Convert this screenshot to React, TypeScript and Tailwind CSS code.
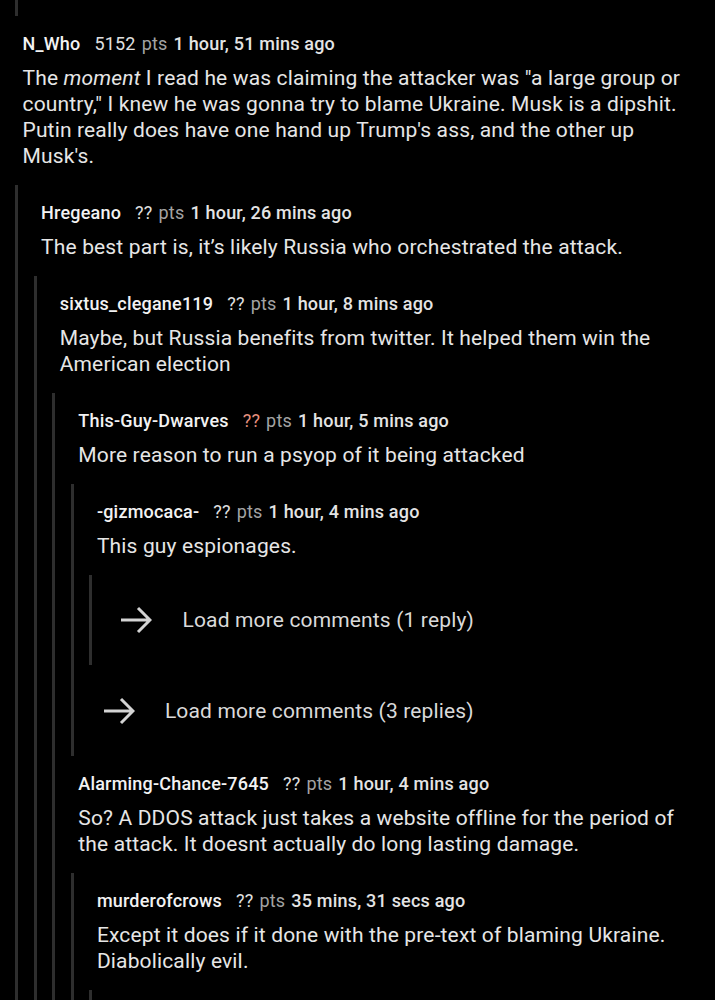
import React from "react";

type Comment = {
  kind: "comment";
  depth: number;
  author: string;
  score: string;
  scoreHot?: boolean;
  age: string;
  body: React.ReactNode;
};

type More = { kind: "more"; depth: number; label: string; arrowOffset: string; height: string };
type Stub = { kind: "stub"; depth: number; height: string };

type Row = Comment | More | Stub;

const rows: Row[] = [
  { kind: "stub", depth: 1, height: "h-[16px]" },
  {
    kind: "comment",
    depth: 0,
    author: "N_Who",
    score: "5152",
    age: "1 hour, 51 mins ago",
    body: (
      <>
        The <em>moment</em> I read he was claiming the attacker was "a large group or
        country," I knew he was gonna try to blame Ukraine. Musk is a dipshit. Putin
        really does have one hand up Trump's ass, and the other up Musk's.
      </>
    ),
  },
  {
    kind: "comment",
    depth: 1,
    author: "Hregeano",
    score: "??",
    age: "1 hour, 26 mins ago",
    body: "The best part is, it’s likely Russia who orchestrated the attack.",
  },
  {
    kind: "comment",
    depth: 2,
    author: "sixtus_clegane119",
    score: "??",
    age: "1 hour, 8 mins ago",
    body: "Maybe, but Russia benefits from twitter. It helped them win the American election",
  },
  {
    kind: "comment",
    depth: 3,
    author: "This-Guy-Dwarves",
    score: "??",
    scoreHot: true,
    age: "1 hour, 5 mins ago",
    body: "More reason to run a psyop of it being attacked",
  },
  {
    kind: "comment",
    depth: 4,
    author: "-gizmocaca-",
    score: "??",
    age: "1 hour, 4 mins ago",
    body: "This guy espionages.",
  },
  {
    kind: "more",
    depth: 5,
    label: "Load more comments (1 reply)",
    arrowOffset: "ml-[5px]",
    height: "h-[90px]",
  },
  {
    kind: "more",
    depth: 4,
    label: "Load more comments (3 replies)",
    arrowOffset: "ml-[6px]",
    height: "h-[91px]",
  },
  {
    kind: "comment",
    depth: 3,
    author: "Alarming-Chance-7645",
    score: "??",
    age: "1 hour, 4 mins ago",
    body: "So? A DDOS attack just takes a website offline for the period of the attack. It doesnt actually do long lasting damage.",
  },
  {
    kind: "comment",
    depth: 4,
    author: "murderofcrows",
    score: "??",
    age: "35 mins, 31 secs ago",
    body: "Except it does if it done with the pre-text of blaming Ukraine. Diabolically evil.",
  },
  { kind: "stub", depth: 5, height: "h-[40px]" },
];

function Rails({ depth }: { depth: number }) {
  return (
    <div className="flex shrink-0 pl-[15px]">
      {Array.from({ length: depth }).map((_, i) => (
        <div key={i} className="w-[18.6px] flex">
          <div className="w-[3px] bg-[#2e2e2e]" />
        </div>
      ))}
    </div>
  );
}

function Arrow() {
  return (
    <svg width="32" height="28" viewBox="0 0 32 28" fill="none" className="shrink-0">
      <path
        d="M1 14H30M18 2L30 14L18 26"
        stroke="#d4d4d4"
        strokeWidth="3"
        strokeLinecap="butt"
        strokeLinejoin="miter"
      />
    </svg>
  );
}

function CommentRow({ c }: { c: Comment }) {
  return (
    <div className="flex">
      <Rails depth={c.depth} />
      <div className="flex-1 pl-[7.5px] pr-[24px] pt-[16px] pb-[16px]">
        <div className="flex items-baseline h-[24px] text-[18px] leading-[24px] tracking-[0.2px] whitespace-nowrap">
          <span className="font-medium text-[#f2f2f2] mr-[14px]">{c.author}</span>
          <span className={c.scoreHot ? "text-[#e8907f]" : "text-[#e0e0e0]"}>{c.score}</span>
          <span className="text-[#a3a3a3] ml-[6px]">pts</span>
          <span className="font-medium text-[#e4e4e4] ml-[6px]">{c.age}</span>
        </div>
        <p className="mt-[9px] text-[21px] leading-[26px] tracking-[0.15px] text-[#e6e6e6]">
          {c.body}
        </p>
      </div>
    </div>
  );
}

function MoreRow({ m }: { m: More }) {
  return (
    <div className={`flex ${m.height}`}>
      <Rails depth={m.depth} />
      <div className="flex-1 pl-[7.5px] flex items-center">
        <div className={`${m.arrowOffset} flex items-center gap-[30px]`}>
          <Arrow />
          <span className="text-[21px] leading-[26px] tracking-[0.15px] text-[#dadada]">
            {m.label}
          </span>
        </div>
      </div>
    </div>
  );
}

export default function App() {
  return (
    <div
      className="min-h-screen bg-black overflow-hidden"
      style={{ fontFamily: "Roboto, 'Noto Sans', sans-serif" }}
    >
      {rows.map((r, i) => {
        if (r.kind === "comment") return <CommentRow key={i} c={r} />;
        if (r.kind === "more") return <MoreRow key={i} m={r} />;
        return (
          <div key={i} className={`flex ${r.height}`}>
            <Rails depth={r.depth} />
          </div>
        );
      })}
    </div>
  );
}
